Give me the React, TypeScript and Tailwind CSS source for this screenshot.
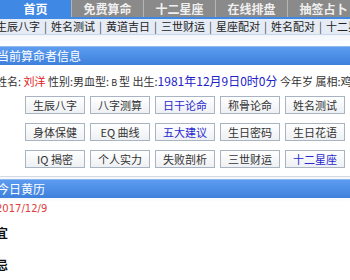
const TABS = ["首页", "免费算命", "十二星座", "在线排盘", "抽签占卜"];
const SUBNAV = ["生辰八字", "姓名测试", "黄道吉日", "三世财运", "星座配对", "姓名配对", "十二星座"];

const BUTTONS: { label: string; blue?: boolean }[][] = [
  [{ label: "生辰八字" }, { label: "八字测算" }, { label: "日干论命", blue: true }, { label: "称骨论命" }, { label: "姓名测试" }],
  [{ label: "身体保健" }, { label: "EQ 曲线" }, { label: "五大建议", blue: true }, { label: "生日密码" }, { label: "生日花语" }],
  [{ label: "IQ 揭密" }, { label: "个人实力" }, { label: "失败剖析" }, { label: "三世财运" }, { label: "十二星座", blue: true }],
];

const font = { fontFamily: '"Noto Sans CJK SC", "Noto Sans", sans-serif' };

function SectionBar({ title }: { title: string }) {
  return (
    <div className="h-[19px] bg-gradient-to-b from-[#5c9cf0] to-[#3d80dc] border-t border-[#8fb8ee] flex items-center -ml-[3px]">
      <span className="text-[12px] leading-none text-white">{title}</span>
    </div>
  );
}

export default function App() {
  return (
    <div className="w-[350px] h-[280px] overflow-hidden bg-white text-[#333]" style={font}>
      {/* Top tabs */}
      <div className="flex h-[17px] bg-[#8a8a8a]">
        {TABS.map((t, i) => (
          <div
            key={t}
            className={
              i === 0
                ? "w-[71px] shrink-0 bg-[#3f88e4] text-white text-[12px] leading-[17px] text-center font-bold"
                : "w-[72px] shrink-0 border-l border-[#b5b5b5] text-[#f0f0f0] text-[12px] leading-[17px] text-center font-bold"
            }
          >
            {t}
          </div>
        ))}
      </div>
      <div className="h-[2px] bg-[#3f88e4]" />

      {/* Sub navigation */}
      <div className="h-[16px] bg-[#e6ecf5] border-b border-[#c8d6ea] flex items-center whitespace-nowrap -ml-[4px] text-[11px] leading-none text-[#222]">
        {SUBNAV.map((s, i) => (
          <span key={i} className="flex items-center">
            {i > 0 && <span className="px-[4px] text-[#444]">|</span>}
            {s}
          </span>
        ))}
      </div>
      <div className="h-[11px] bg-gradient-to-b from-[#f2f6fc] to-white" />

      <SectionBar title="当前算命者信息" />

      {/* Info line */}
      <div className="mt-[9px] -ml-[4px] whitespace-nowrap text-[11px] leading-[14px] text-[#333]">
        姓名: <span className="text-[#e02020]">刘洋</span> 性别:男血型:<span className="text-[9px] px-[2px]">B</span>型 出生:
        <span className="text-[#2323c8] text-[12px]">1981年12月9日0时0分</span> 今年岁 属相:鸡 星座:射手座
      </div>

      {/* Buttons */}
      <div className="mt-[6px] flex flex-col gap-[9px] pl-[25px]">
        {BUTTONS.map((row, r) => (
          <div key={r} className="flex gap-[5px]">
            {row.map((b) => (
              <div
                key={b.label}
                className={
                  "w-[60px] h-[18px] border border-[#a9b4c2] bg-gradient-to-b from-white to-[#eef0f3] text-[11px] leading-[16px] text-center " +
                  (b.blue ? "text-[#2a2ad0]" : "text-[#333]")
                }
              >
                {b.label}
              </div>
            ))}
          </div>
        ))}
      </div>

      <div className="mt-[8px] h-[3px] border-t border-[#d6dbe3] bg-[#f6f8fb]" />
      <SectionBar title="今日黄历" />
      <div className="h-[4px] bg-gradient-to-b from-[#f5f8fd] to-white" />

      <div className="-ml-[4px] text-[10px] leading-[14px] text-[#e03c3c]" style={{ fontFamily: '"DejaVu Sans", sans-serif' }}>
        2017/12/9
      </div>
      <div className="mt-[8px] -ml-[4px] text-[12px] font-bold text-[#111]">宜</div>
      <div className="mt-[14px] -ml-[4px] text-[12px] font-bold text-[#111]">忌</div>
    </div>
  );
}
